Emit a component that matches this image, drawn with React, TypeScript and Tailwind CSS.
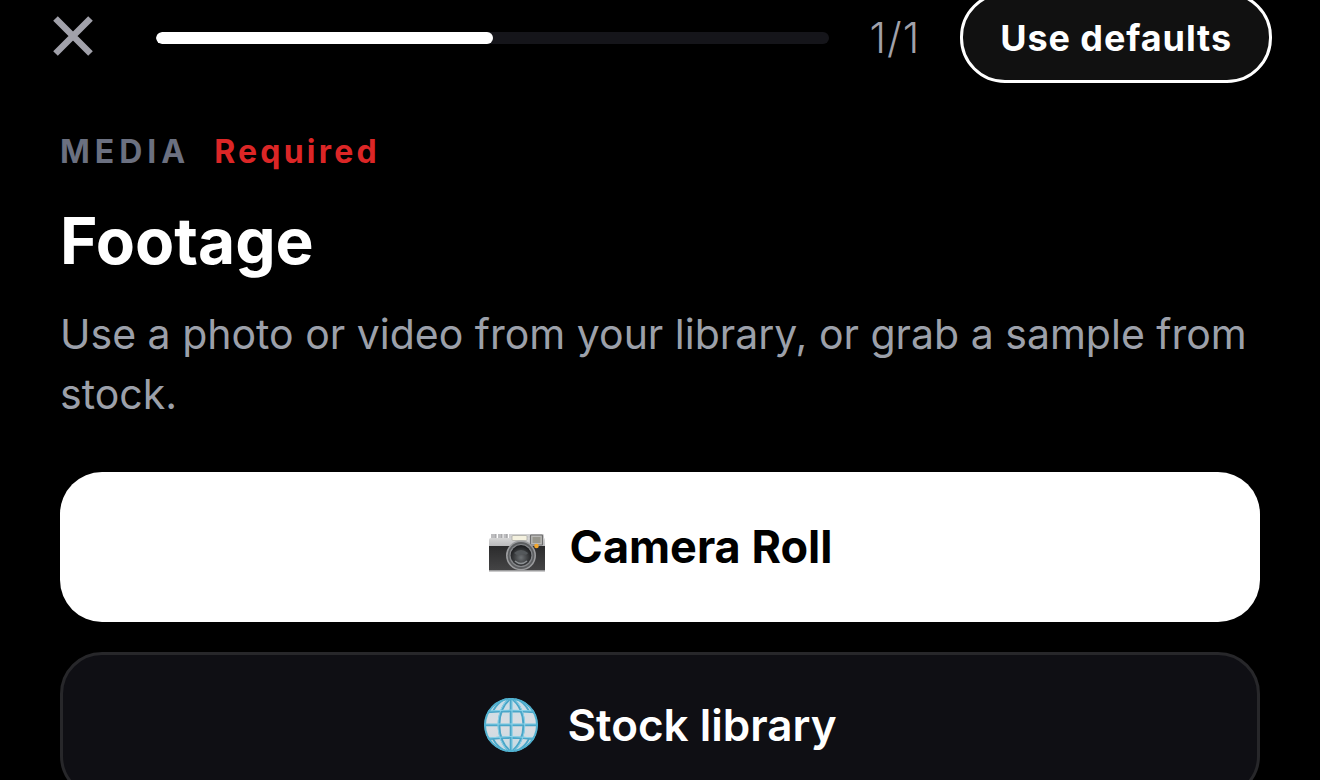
import React from 'react'

const CloseIcon = () => (
  <svg viewBox="0 0 40 40" className="size-10" fill="none" stroke="currentColor" strokeWidth="6.5" aria-hidden="true">
    <path d="M2.5 2.5 37.5 37.5M37.5 2.5 2.5 37.5" />
  </svg>
)

const CameraIcon = () => (
  <svg viewBox="0 0 58 40" className="mt-3 h-10 w-[58px]" aria-hidden="true">
    <defs>
      <linearGradient id="cam-top" x1="0" y1="0" x2="0" y2="1">
        <stop offset="0" stopColor="#d6d6d6" />
        <stop offset="1" stopColor="#b4b4b6" />
      </linearGradient>
      <linearGradient id="cam-body" x1="0" y1="0" x2="0" y2="1">
        <stop offset="0" stopColor="#2b2b2c" />
        <stop offset="1" stopColor="#454546" />
      </linearGradient>
      <radialGradient id="cam-lens" cx="0.5" cy="0.6" r="0.55">
        <stop offset="0" stopColor="#6d7174" />
        <stop offset="0.6" stopColor="#3c3e40" />
        <stop offset="1" stopColor="#1d1e20" />
      </radialGradient>
    </defs>
    <path d="M3 1h5v5H3zM10 1h4v5h-4zM15.5 1h4v5h-4z" fill="#bdbdbf" />
    <path d="M8 1v5M14 1v5M19 1v5" stroke="#8a8b8d" strokeWidth="0.8" />
    <path d="M21 1h34q1 0 1 2v3H21z" fill="#cfcfd0" />
    <path d="M1 7q0-2 2-2h53q1 0 1 2v8H1z" fill="url(#cam-top)" />
    <path d="M1 13h56v25H1z" fill="url(#cam-body)" />
    <path d="M1 38h56" stroke="#b9b9ba" strokeWidth="1.4" />
    <rect x="24" y="2.5" width="15" height="5" rx="1" fill="#f4f1df" stroke="#a4a39d" strokeWidth="0.7" />
    <rect x="42.5" y="2" width="12" height="10" rx="0.8" fill="#b9b8b6" stroke="#6e6e6e" strokeWidth="1.2" />
    <rect x="44.5" y="4" width="8" height="6" fill="#96958c" />
    <circle cx="33" cy="22.5" r="15" fill="#9b9c9e" />
    <circle cx="33" cy="22.5" r="13.4" fill="#5c5e60" />
    <circle cx="33" cy="22.5" r="11.6" fill="#85878a" />
    <circle cx="33" cy="22.5" r="10.4" fill="url(#cam-lens)" />
    <path d="M26 20q7-6 14 0-1 3-5 1-5 3-9-1Z" fill="#54585b" />
    <path d="M27 28q6 5 12 0" fill="none" stroke="#8d9194" strokeWidth="1.5" />
    <circle cx="48.5" cy="13" r="2.3" fill="#f3a72c" />
  </svg>
)

const GlobeIcon = () => (
  <svg viewBox="0 0 56 56" className="size-14" fill="none" aria-hidden="true">
    <defs>
      <linearGradient id="globe-fill" x1="0" y1="0" x2="0" y2="1">
        <stop offset="0" stopColor="#c4dde8" />
        <stop offset="0.5" stopColor="#dcdde1" />
        <stop offset="1" stopColor="#c2dae4" />
      </linearGradient>
      <clipPath id="globe-clip">
        <circle cx="28" cy="28" r="27" />
      </clipPath>
    </defs>
    <circle cx="28" cy="28" r="26.5" fill="url(#globe-fill)" />
    {/* meridians and parallels */}
    <g clipPath="url(#globe-clip)" stroke="#4aa6c8" strokeWidth="2.6">
      <path d="M28 1v54M1 28h54M4 15q24-2 48 0M4 42q24-3 48 0" />
      <path d="M28 1C12 12 12 44 28 55M28 1c17 11 17 43 0 54" />
      <path d="M24 1q-9 4-14 13M32 1q9 4 14 13M24 55q-9-4-14-13M32 55q9-4 14-13" strokeWidth="1.8" />
    </g>
    <g clipPath="url(#globe-clip)" stroke="#8fd6ec" strokeWidth="0.9">
      <path d="M29 1v54M1 27h54M4 14q24-2 48 0M4 41q24-3 48 0" />
      <path d="M27 1C11 12 11 44 27 55M29 1c17 11 17 43 0 54" />
    </g>
    <circle cx="28" cy="28" r="26" stroke="#50b1d0" strokeWidth="2" />
  </svg>
)

const Header = ({ progress }: { progress: number }) => (
  <header className="-mt-2 flex items-center gap-10 px-12">
    <button type="button" aria-label="Close" className="-mt-1 flex w-[68px] pl-[5px] text-[#a1a1aa]">
      <CloseIcon />
    </button>
    <div
      role="progressbar"
      aria-label="Progress"
      aria-valuenow={progress}
      className="h-3 grow overflow-hidden rounded-full bg-[#15151a]"
    >
      <div className="h-full rounded-full bg-white" style={{ width: `${progress}%` }} />
    </div>
    <span className="text-[42px] leading-none font-light tracking-wide text-[#a1a1aa]">1/1</span>
    <button
      type="button"
      className="h-[91px] rounded-[45px] border-3 border-white bg-[#111111] px-[37px] text-[36px] font-bold tracking-wide whitespace-nowrap"
    >
      Use defaults
    </button>
  </header>
)

const App = (): React.ReactElement => {
  return (
    <div className="h-screen overflow-hidden bg-black font-['Inter','Liberation_Sans',sans-serif] text-white">
      <Header progress={50} />

      <main className="px-[60px] pt-[49px]">
        <div className="flex items-center gap-6 text-[32px] leading-10 font-bold">
          <span className="tracking-[5px] text-[#6b7080]">MEDIA</span>
          <span className="tracking-widest text-[#dc2626]">Required</span>
        </div>
        <h1 className="mt-8 text-[64px] leading-[74px] font-bold">Footage</h1>
        <p className="mt-[26px] text-[41px] leading-[60px] text-[#9ca0aa]">
          Use a photo or video from your library, or grab a sample from stock.
        </p>

        <div className="mt-12 flex flex-col gap-[30px]">
          <button
            type="button"
            className="flex h-[150px] items-center justify-center gap-6 rounded-[42px] bg-white text-[45px] font-bold text-black"
          >
            <CameraIcon />
            Camera Roll
          </button>
          <button
            type="button"
            className="flex h-[146px] items-center justify-center gap-7 rounded-[42px] border-3 border-[#27272a] bg-[#0f0f14] text-[44px] font-semibold"
          >
            <GlobeIcon />
            Stock library
          </button>
        </div>
      </main>
    </div>
  )
}

export default App
